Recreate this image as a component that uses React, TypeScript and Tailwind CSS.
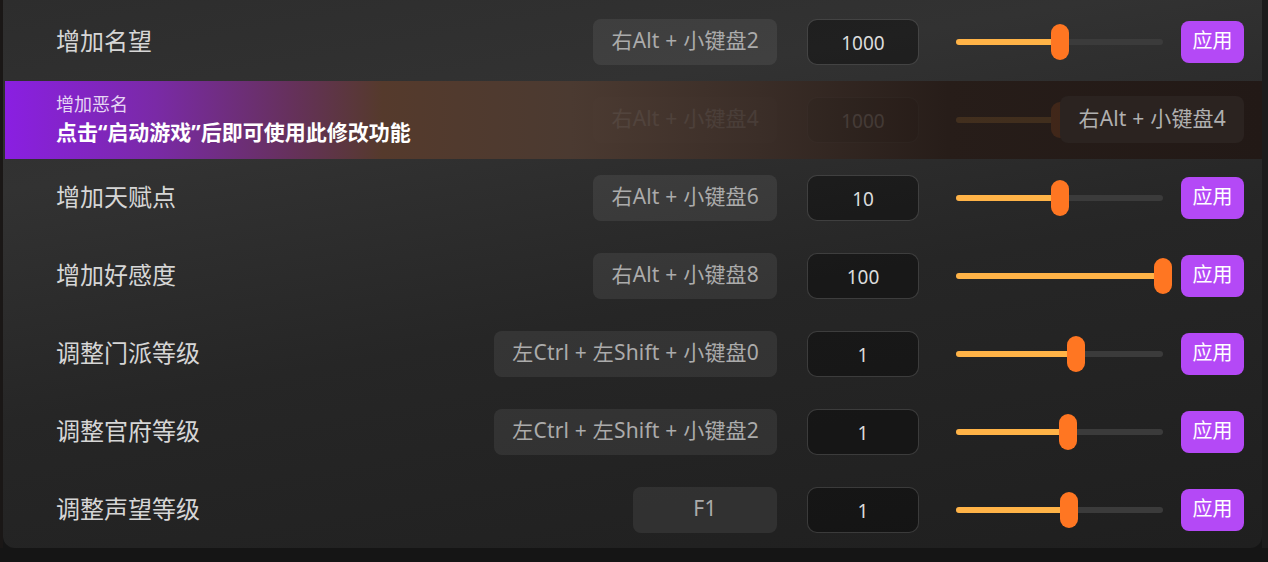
import React from 'react'

type Item = {
  name: string
  keys: string
  value: string
  pct: number
}

const items: Item[] = [
  { name: '增加名望', keys: '右Alt + 小键盘2', value: '1000', pct: 50 },
  { name: '增加恶名', keys: '右Alt + 小键盘4', value: '1000', pct: 50 },
  { name: '增加天赋点', keys: '右Alt + 小键盘6', value: '10', pct: 50 },
  { name: '增加好感度', keys: '右Alt + 小键盘8', value: '100', pct: 100 },
  { name: '调整门派等级', keys: '左Ctrl + 左Shift + 小键盘0', value: '1', pct: 58 },
  { name: '调整官府等级', keys: '左Ctrl + 左Shift + 小键盘2', value: '1', pct: 54 },
  { name: '调整声望等级', keys: 'F1', value: '1', pct: 54.5 },
]

const Controls = ({ item, locked }: { item: Item; locked?: boolean }) => (
  <>
    <div className="flex h-[46px] min-w-[144px] items-center justify-center rounded-lg bg-white/[0.07] px-[18px] pb-[2px] text-[21px] tracking-[0.2px] text-[#ababab]">
      {item.keys}
    </div>
    <div className="ml-[30px] flex h-[46px] w-[112px] items-center justify-center rounded-[10px] border border-white/[0.16] bg-black/[0.35] pt-[2px] text-[19px] text-[#dcdcdc]">
      {item.value}
    </div>
    {/* slider */}
    <div className="ml-[28px] w-[225px] px-[9px]">
      <div className="relative h-[6px] rounded-full bg-[#3b3b3b]">
        <div className="h-full rounded-full bg-[#ffb347]" style={{ width: `${item.pct}%` }} />
        <div
          className="absolute top-1/2 h-[36px] w-[18px] -translate-x-1/2 -translate-y-1/2 rounded-full bg-[#ff7622]"
          style={{ left: `${item.pct}%` }}
        />
      </div>
    </div>
    <button className="ml-[9px] flex h-[42px] w-[63px] items-center justify-center rounded-lg bg-[#b449f6] pb-[2px] text-[20px] text-white">
      {locked ? null : '应用'}
    </button>
  </>
)

const Row = ({ item }: { item: Item }) => (
  <div className="flex h-[78px] items-center pl-[53px] pr-[18px]">
    <div className="flex-1 pb-[2px] text-[24px] text-[#d6d6d6]">{item.name}</div>
    <Controls item={item} />
  </div>
)

const LockedRow = ({ item }: { item: Item }) => (
  <div className="relative ml-[2px] h-[78px] bg-[linear-gradient(90deg,#8a1fe2_0%,#7a2aa6_12%,#65315a_23%,#553a2c_30%,#4b3a31_45%,#3a2d27_60%,#271d19_75%,#221916_100%)]">
    <div className="flex h-full items-center pl-[51px] pr-[18px] opacity-[0.12]">
      <div className="flex-1" />
      <Controls item={item} locked />
    </div>
    <div className="absolute left-[51px] top-[12px] leading-tight">
      <div className="text-[18px] text-[#e6d6f4]">{item.name}</div>
      <div className="mt-[3px] text-[21px] font-bold text-white">点击“启动游戏”后即可使用此修改功能</div>
    </div>
    <div className="absolute right-[18px] top-[15px] flex h-[47px] items-center rounded-lg bg-[#2b2320] px-[18px] pb-[2px] text-[21px] tracking-[0.2px] text-[#b0b0b0]">
      {item.keys}
    </div>
  </div>
)

export default function App() {
  return (
    <div
      className="flex h-[562px] w-[1268px] bg-[#151515]"
      style={{ fontFamily: '"Noto Sans", "Noto Sans CJK SC", sans-serif' }}
    >
      <div className="h-[548px] w-[3px] bg-[#1a1716]" />
      <div className="h-[548px] w-[1259px] overflow-hidden rounded-b-[12px] bg-[linear-gradient(170deg,#2d2d2d_0%,#323232_25%,#262626_55%,#1f1f1f_100%)] pt-[3px]">
        {items.map((item, i) =>
          i === 1 ? <LockedRow key={item.name} item={item} /> : <Row key={item.name} item={item} />
        )}
      </div>
      <div className="h-[548px] flex-1 bg-[#1c1c1c]" />
    </div>
  )
}
